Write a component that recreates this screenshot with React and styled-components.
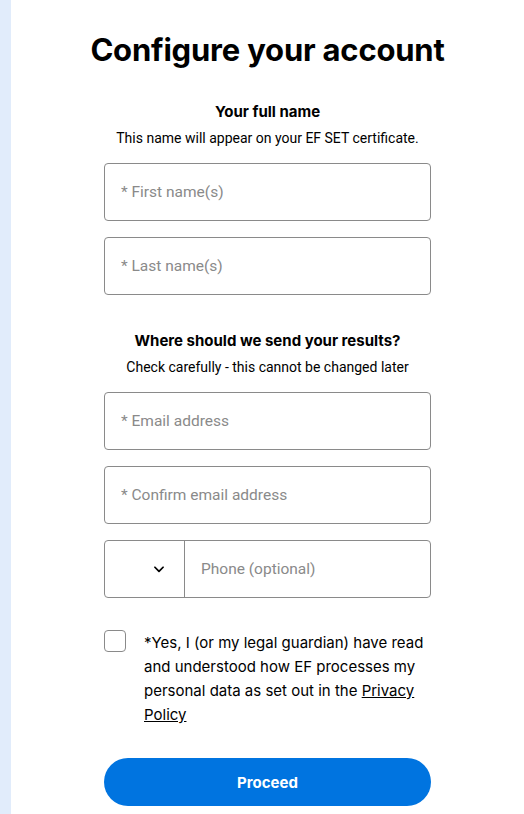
import styled, { createGlobalStyle } from "styled-components";

const GlobalStyle = createGlobalStyle`
  html, body {
    margin: 0;
    padding: 0;
    background: #ffffff;
  }
  body {
    font-family: "Inter", "Roboto", sans-serif;
    color: #000;
  }
`;

const Page = styled.div`
  display: flex;
  min-height: 814px;
`;

const Strip = styled.div`
  width: 11px;
  flex-shrink: 0;
  background: #e1ecfb;
`;

const Main = styled.div`
  flex: 1;
  display: flex;
  flex-direction: column;
  align-items: center;
  padding-top: 30px;
`;

const Title = styled.h1`
  margin: 0 0 32px;
  font-family: "Inter", sans-serif;
  font-size: 31px;
  font-weight: 700;
  letter-spacing: -0.2px;
  line-height: 40px;
`;

const Form = styled.form`
  width: 327px;
  display: flex;
  flex-direction: column;
`;

const SectionTitle = styled.h2`
  margin: 0;
  text-align: center;
  font-family: "Inter", sans-serif;
  font-size: 15px;
  font-weight: 700;
  line-height: 20px;
`;

const SectionText = styled.p`
  margin: 7px 0 16px;
  text-align: center;
  font-family: "Roboto", sans-serif;
  font-size: 14px;
  line-height: 18px;
  white-space: nowrap;
`;

const Field = styled.div`
  display: flex;
  height: 58px;
  box-sizing: border-box;
  border: 1px solid #8a8a8a;
  border-radius: 4px;
  margin-bottom: ${p => p.$last ? "0" : "16px"};
  overflow: hidden;
`;

const Input = styled.input`
  flex: 1;
  min-width: 0;
  border: none;
  outline: none;
  padding: 0 16px;
  font-family: "Roboto", sans-serif;
  font-size: 15.5px;
  color: #222;
  background: transparent;
  &::placeholder {
    color: #8a8a8a;
  }
`;

const CountrySelect = styled.div`
  width: 80px;
  flex-shrink: 0;
  border-right: 1px solid #8a8a8a;
  display: flex;
  align-items: center;
  justify-content: flex-end;
  padding-right: 18px;
  box-sizing: border-box;
`;

const Spacer = styled.div`
  height: ${p => p.$h}px;
`;

const Consent = styled.label`
  display: flex;
  align-items: flex-start;
  gap: 18px;
  margin-top: 33px;
  font-family: "Inter", sans-serif;
  font-size: 15px;
  line-height: 24px;
`;

const Box = styled.span`
  width: 22px;
  height: 22px;
  flex-shrink: 0;
  box-sizing: border-box;
  border: 1px solid #8a8a8a;
  border-radius: 4px;
  margin-top: -1px;
  background: #fff;
`;

const ConsentText = styled.span`
  flex: 1;
  a {
    color: inherit;
    text-decoration: underline;
  }
`;

const Proceed = styled.button`
  margin-top: 31px;
  height: 48px;
  border: none;
  border-radius: 24px;
  background: #0074e0;
  color: #fff;
  font-family: "Inter", sans-serif;
  font-size: 15px;
  font-weight: 700;
  cursor: pointer;
`;

const Chevron = () => (
  <svg width="14" height="14" viewBox="0 0 24 24" fill="none" stroke="#000" strokeWidth="3" strokeLinecap="round" strokeLinejoin="round">
    <polyline points="5 9 12 16 19 9" />
  </svg>
);

const App = () => {
  return (
    <>
      <GlobalStyle />
      <Page>
        <Strip />
        <Main>
          <Title>Configure your account</Title>
          <Form onSubmit={e => e.preventDefault()}>
            <SectionTitle>Your full name</SectionTitle>
            <SectionText>This name will appear on your EF SET certificate.</SectionText>
            <Field>
              <Input placeholder="* First name(s)" />
            </Field>
            <Field $last>
              <Input placeholder="* Last name(s)" />
            </Field>
            <Spacer $h={36} />
            <SectionTitle>Where should we send your results?</SectionTitle>
            <SectionText>Check carefully - this cannot be changed later</SectionText>
            <Field>
              <Input placeholder="* Email address" />
            </Field>
            <Field>
              <Input placeholder="* Confirm email address" />
            </Field>
            <Field $last>
              <CountrySelect>
                <Chevron />
              </CountrySelect>
              <Input placeholder="Phone (optional)" />
            </Field>
            <Consent>
              <Box />
              <ConsentText>
                *Yes, I (or my legal guardian) have read and understood how EF processes my personal data as set out in the <a href="#">Privacy Policy</a>
              </ConsentText>
            </Consent>
            <Proceed type="button">Proceed</Proceed>
          </Form>
        </Main>
      </Page>
    </>
  );
};

export default App;
